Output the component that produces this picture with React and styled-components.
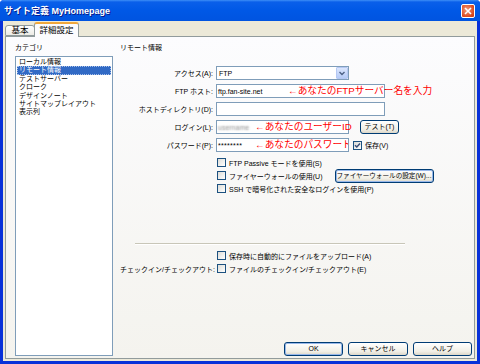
import styled, { createGlobalStyle } from 'styled-components';

const GlobalStyle = createGlobalStyle`
    html, body {
        margin: 0;
        padding: 0;
        background: #fff;
    }
    body {
        font-family: "Liberation Sans", "Noto Sans CJK JP", sans-serif;
        color: #000;
    }
`

const Window = styled.div`
    width: 480px;
    height: 364px;
    display: flex;
    flex-direction: column;
    background: #0831d9;
    border-radius: 4px 4px 0 0;
    overflow: hidden;
`

const TitleBar = styled.div`
    height: 21px;
    flex: none;
    display: flex;
    align-items: center;
    justify-content: space-between;
    padding: 0 5px 0 4px;
    background: linear-gradient(to bottom, #3d8ef7 0, #0a5fea 2px, #0058e6 50%, #0054e0 100%);
`

const Title = styled.span`
    color: #fff;
    font-size: 9px;
    font-weight: bold;
    text-shadow: 1px 1px 0 #0a1a8a;
    white-space: nowrap;
`

const CloseBtn = styled.div`
    width: 14px;
    height: 14px;
    box-sizing: border-box;
    border: 1px solid #fff;
    border-radius: 2px;
    background: radial-gradient(circle at 40% 40%, #f29a7a, #dc4a20 70%, #c23a14);
    display: flex;
    align-items: center;
    justify-content: center;
`

const Frame = styled.div`
    flex: 1;
    min-height: 0;
    display: flex;
    flex-direction: column;
    margin: 0 3px 3px 3px;
    padding: 0 2px 2px 2px;
    background: #ece9d8;
`

const TabRow = styled.div`
    height: 15px;
    flex: none;
    display: flex;
    align-items: flex-end;
    position: relative;
    z-index: 1;
`

const Tab = styled.div`
    box-sizing: border-box;
    width: ${p => p.$w}px;
    height: ${p => (p.$active ? 15 : 11)}px;
    margin-left: ${p => (p.$active ? -1 : 0)}px;
    margin-bottom: ${p => (p.$active ? -1 : 0)}px;
    border: 1px solid #919b9c;
    border-top: ${p => (p.$active ? '2px solid #f0a83c' : '1px solid #919b9c')};
    border-bottom: ${p => (p.$active ? 'none' : '1px solid #919b9c')};
    border-radius: 3px 3px 0 0;
    background: ${p => (p.$active ? '#fcfcfe' : 'linear-gradient(#ffffff, #ecebe5)')};
    font-size: 8.5px;
    line-height: ${p => (p.$active ? 12 : 9)}px;
    text-align: center;
    white-space: nowrap;
`

const Panel = styled.div`
    flex: 1;
    min-height: 0;
    display: flex;
    gap: 7px;
    border: 1px solid #919b9c;
    background: linear-gradient(#fcfcfe, #f4f3ee);
    padding: 4px 2px 2px 9px;
`

const LeftCol = styled.div`
    width: 98px;
    flex: none;
    display: flex;
    flex-direction: column;
`

const SectionLabel = styled.div`
    font-size: 7px;
    line-height: 13px;
    height: 13px;
    margin-bottom: ${p => p.$mb || 0}px;
    white-space: nowrap;
`

const ListBox = styled.div`
    flex: 1;
    box-sizing: border-box;
    border: 1px solid #7f9db9;
    background: #fff;
    padding: 1px;
`

const ListItem = styled.div`
    font-size: 7px;
    line-height: 8.4px;
    height: 8.4px;
    padding-left: 2px;
    white-space: nowrap;
    background: ${p => (p.$selected ? '#316ac5' : 'transparent')};
    color: ${p => (p.$selected ? '#fff' : '#000')};
    outline: ${p => (p.$selected ? '1px dotted #a8c0e8' : 'none')};
    outline-offset: -1px;
`

const RightCol = styled.div`
    flex: 1;
    min-width: 0;
    display: flex;
    flex-direction: column;
`

const FormGrid = styled.div`
    display: grid;
    grid-template-columns: 93px auto;
    grid-auto-rows: ${p => p.$row || 14}px;
    column-gap: 3px;
    row-gap: ${p => p.$gap ?? 4}px;
    align-items: center;
`

const Label = styled.div`
    font-size: 7px;
    text-align: right;
    white-space: nowrap;
`

const FieldRow = styled.div`
    display: flex;
    align-items: center;
    padding-left: ${p => p.$pl || 0}px;
`

const Select = styled.div`
    width: 133px;
    height: 14px;
    box-sizing: border-box;
    border: 1px solid #7f9db9;
    background: #fff;
    display: flex;
    align-items: center;
    font-size: 7px;
    padding-left: 2px;
`

const DropBtn = styled.div`
    margin-left: auto;
    width: 12px;
    height: 12px;
    box-sizing: border-box;
    border: 1px solid #b5c8f3;
    border-radius: 1px;
    background: linear-gradient(#dbe6fd, #b6cbf7);
    display: flex;
    align-items: center;
    justify-content: center;
`

const TextBox = styled.div`
    position: relative;
    width: ${p => p.$w}px;
    height: 14px;
    box-sizing: border-box;
    border: 1px solid #7f9db9;
    background: #fff;
    padding: 0 1px;
    display: flex;
    align-items: center;
    font-size: 7px;
    white-space: nowrap;
    overflow: ${p => (p.$clip ? 'hidden' : 'visible')};
`

const Blurred = styled.span`
    color: transparent;
    text-shadow: 0 0 2px #8a8a8a;
    font-size: 7px;
`

const Stars = styled.span`
    font-size: 7px;
    letter-spacing: 0.3px;
`

const Note = styled.span`
    position: absolute;
    left: ${p => p.$left}px;
    top: 50%;
    transform: translateY(-50%);
    color: #f00;
    font-size: 9.7px;
    line-height: 1;
    white-space: nowrap;
`

const XpButton = styled.div`
    width: ${p => p.$w}px;
    height: 14px;
    flex: none;
    box-sizing: border-box;
    margin-left: ${p => p.$ml || 0}px;
    border: 1px solid #003c74;
    border-radius: 3px;
    background: linear-gradient(#ffffff, #f1efe6 70%, #dcd7c9);
    box-shadow: ${p => (p.$focus ? 'inset 0 0 0 1px #98b8ea' : 'none')};
    font-size: ${p => p.$fs || 7}px;
    line-height: 12px;
    text-align: center;
    white-space: nowrap;
    overflow: hidden;
`

const CheckList = styled.div`
    margin-top: 4px;
    display: flex;
    flex-direction: column;
`

const CheckRow = styled.div`
    height: 13px;
    display: flex;
    align-items: center;
    padding-left: ${p => p.$pl || 0}px;
`

const Box = styled.span`
    width: 9px;
    height: 9px;
    flex: none;
    box-sizing: border-box;
    margin-left: ${p => p.$ml || 0}px;
    border: 1px solid #1c5180;
    background: linear-gradient(135deg, #dcdcd7, #ffffff);
    display: flex;
    align-items: center;
    justify-content: center;
`

const CheckText = styled.span`
    margin-left: 3px;
    font-size: 7px;
    white-space: nowrap;
`

const Separator = styled.div`
    margin: 48px 0 0 15px;
    width: 270px;
    border-top: 1px solid #c8c6b8;
    border-bottom: 1px solid #fff;
`

const BottomGrid = styled(FormGrid)`
    margin-top: 4px;
`

const ButtonBar = styled.div`
    margin-top: auto;
    display: flex;
    justify-content: flex-end;
    gap: 5px;
`

const Check = ({ checked, ml }) => (
    <Box $ml={ml}>
        {checked && (
            <svg width="7" height="7" viewBox="0 0 7 7">
                <path d="M1 3.2 L2.8 5 L6 1.5" stroke="#3b4f78" strokeWidth="1.5" fill="none" />
            </svg>
        )}
    </Box>
)

const categories = [
    'ローカル情報',
    'リモート情報',
    'テストサーバー',
    'クローク',
    'デザインノート',
    'サイトマップレイアウト',
    '表示列',
]

export default function App() {
    return (
        <>
        <GlobalStyle/>
        <Window>
            <TitleBar>
                <Title>サイト定義 MyHomepage</Title>
                <CloseBtn>
                    <svg width="8" height="8" viewBox="0 0 8 8">
                        <path d="M1 1 L7 7 M7 1 L1 7" stroke="#fff" strokeWidth="1.6" />
                    </svg>
                </CloseBtn>
            </TitleBar>
            <Frame>
                <TabRow>
                    <Tab $w={30}>基本</Tab>
                    <Tab $w={45} $active>詳細設定</Tab>
                </TabRow>
                <Panel>
                    <LeftCol>
                        <SectionLabel $mb={2}>カテゴリ</SectionLabel>
                        <ListBox>
                            {categories.map((c, i) => (
                                <ListItem key={c} $selected={i === 1}>{c}</ListItem>
                            ))}
                        </ListBox>
                    </LeftCol>
                    <RightCol>
                        <SectionLabel $mb={12}>リモート情報</SectionLabel>
                        <FormGrid>
                            <Label>アクセス(A):</Label>
                            <FieldRow>
                                <Select>
                                    FTP
                                    <DropBtn>
                                        <svg width="6" height="5" viewBox="0 0 6 5">
                                            <path d="M0.5 1 L3 3.5 L5.5 1" stroke="#4d6185" strokeWidth="1.4" fill="none" />
                                        </svg>
                                    </DropBtn>
                                </Select>
                            </FieldRow>

                            <Label>FTP ホスト:</Label>
                            <FieldRow>
                                <TextBox $w={169}>
                                    ftp.fan-site.net
                                    <Note $left={71}>←あなたのFTPサーバー名を入力</Note>
                                </TextBox>
                            </FieldRow>

                            <Label>ホストディレクトリ(D):</Label>
                            <FieldRow>
                                <TextBox $w={169} />
                            </FieldRow>

                            <Label>ログイン(L):</Label>
                            <FieldRow>
                                <TextBox $w={133}>
                                    <Blurred>username</Blurred>
                                    <Note $left={38}>←あなたのユーザーID</Note>
                                </TextBox>
                                <XpButton $w={39} $ml={11}>テスト(T)</XpButton>
                            </FieldRow>

                            <Label>パスワード(P):</Label>
                            <FieldRow>
                                <TextBox $w={133} $clip>
                                    <Stars>********</Stars>
                                    <Note $left={38}>←あなたのパスワード</Note>
                                </TextBox>
                                <Check checked ml={4} />
                                <CheckText>保存(V)</CheckText>
                            </FieldRow>
                        </FormGrid>

                        <CheckList>
                            <CheckRow $pl={97}>
                                <Check />
                                <CheckText>FTP Passive モードを使用(S)</CheckText>
                            </CheckRow>
                            <CheckRow $pl={97}>
                                <Check />
                                <CheckText>ファイヤーウォールの使用(U)</CheckText>
                                <XpButton $w={99} $ml={12} $fs={6.6} $focus>ファイヤーウォールの設定(W)...</XpButton>
                            </CheckRow>
                            <CheckRow $pl={97}>
                                <Check />
                                <CheckText>SSH で暗号化された安全なログインを使用(P)</CheckText>
                            </CheckRow>
                        </CheckList>

                        <Separator />

                        <BottomGrid $row={13} $gap={0}>
                            <span />
                            <FieldRow $pl={1}>
                                <Check />
                                <CheckText>保存時に自動的にファイルをアップロード(A)</CheckText>
                            </FieldRow>
                            <Label>チェックイン/チェックアウト:</Label>
                            <FieldRow $pl={1}>
                                <Check />
                                <CheckText>ファイルのチェックイン/チェックアウト(E)</CheckText>
                            </FieldRow>
                        </BottomGrid>

                        <ButtonBar>
                            <XpButton $w={59} $focus>OK</XpButton>
                            <XpButton $w={60}>キャンセル</XpButton>
                            <XpButton $w={59}>ヘルプ</XpButton>
                        </ButtonBar>
                    </RightCol>
                </Panel>
            </Frame>
        </Window>
        </>
    )
}
